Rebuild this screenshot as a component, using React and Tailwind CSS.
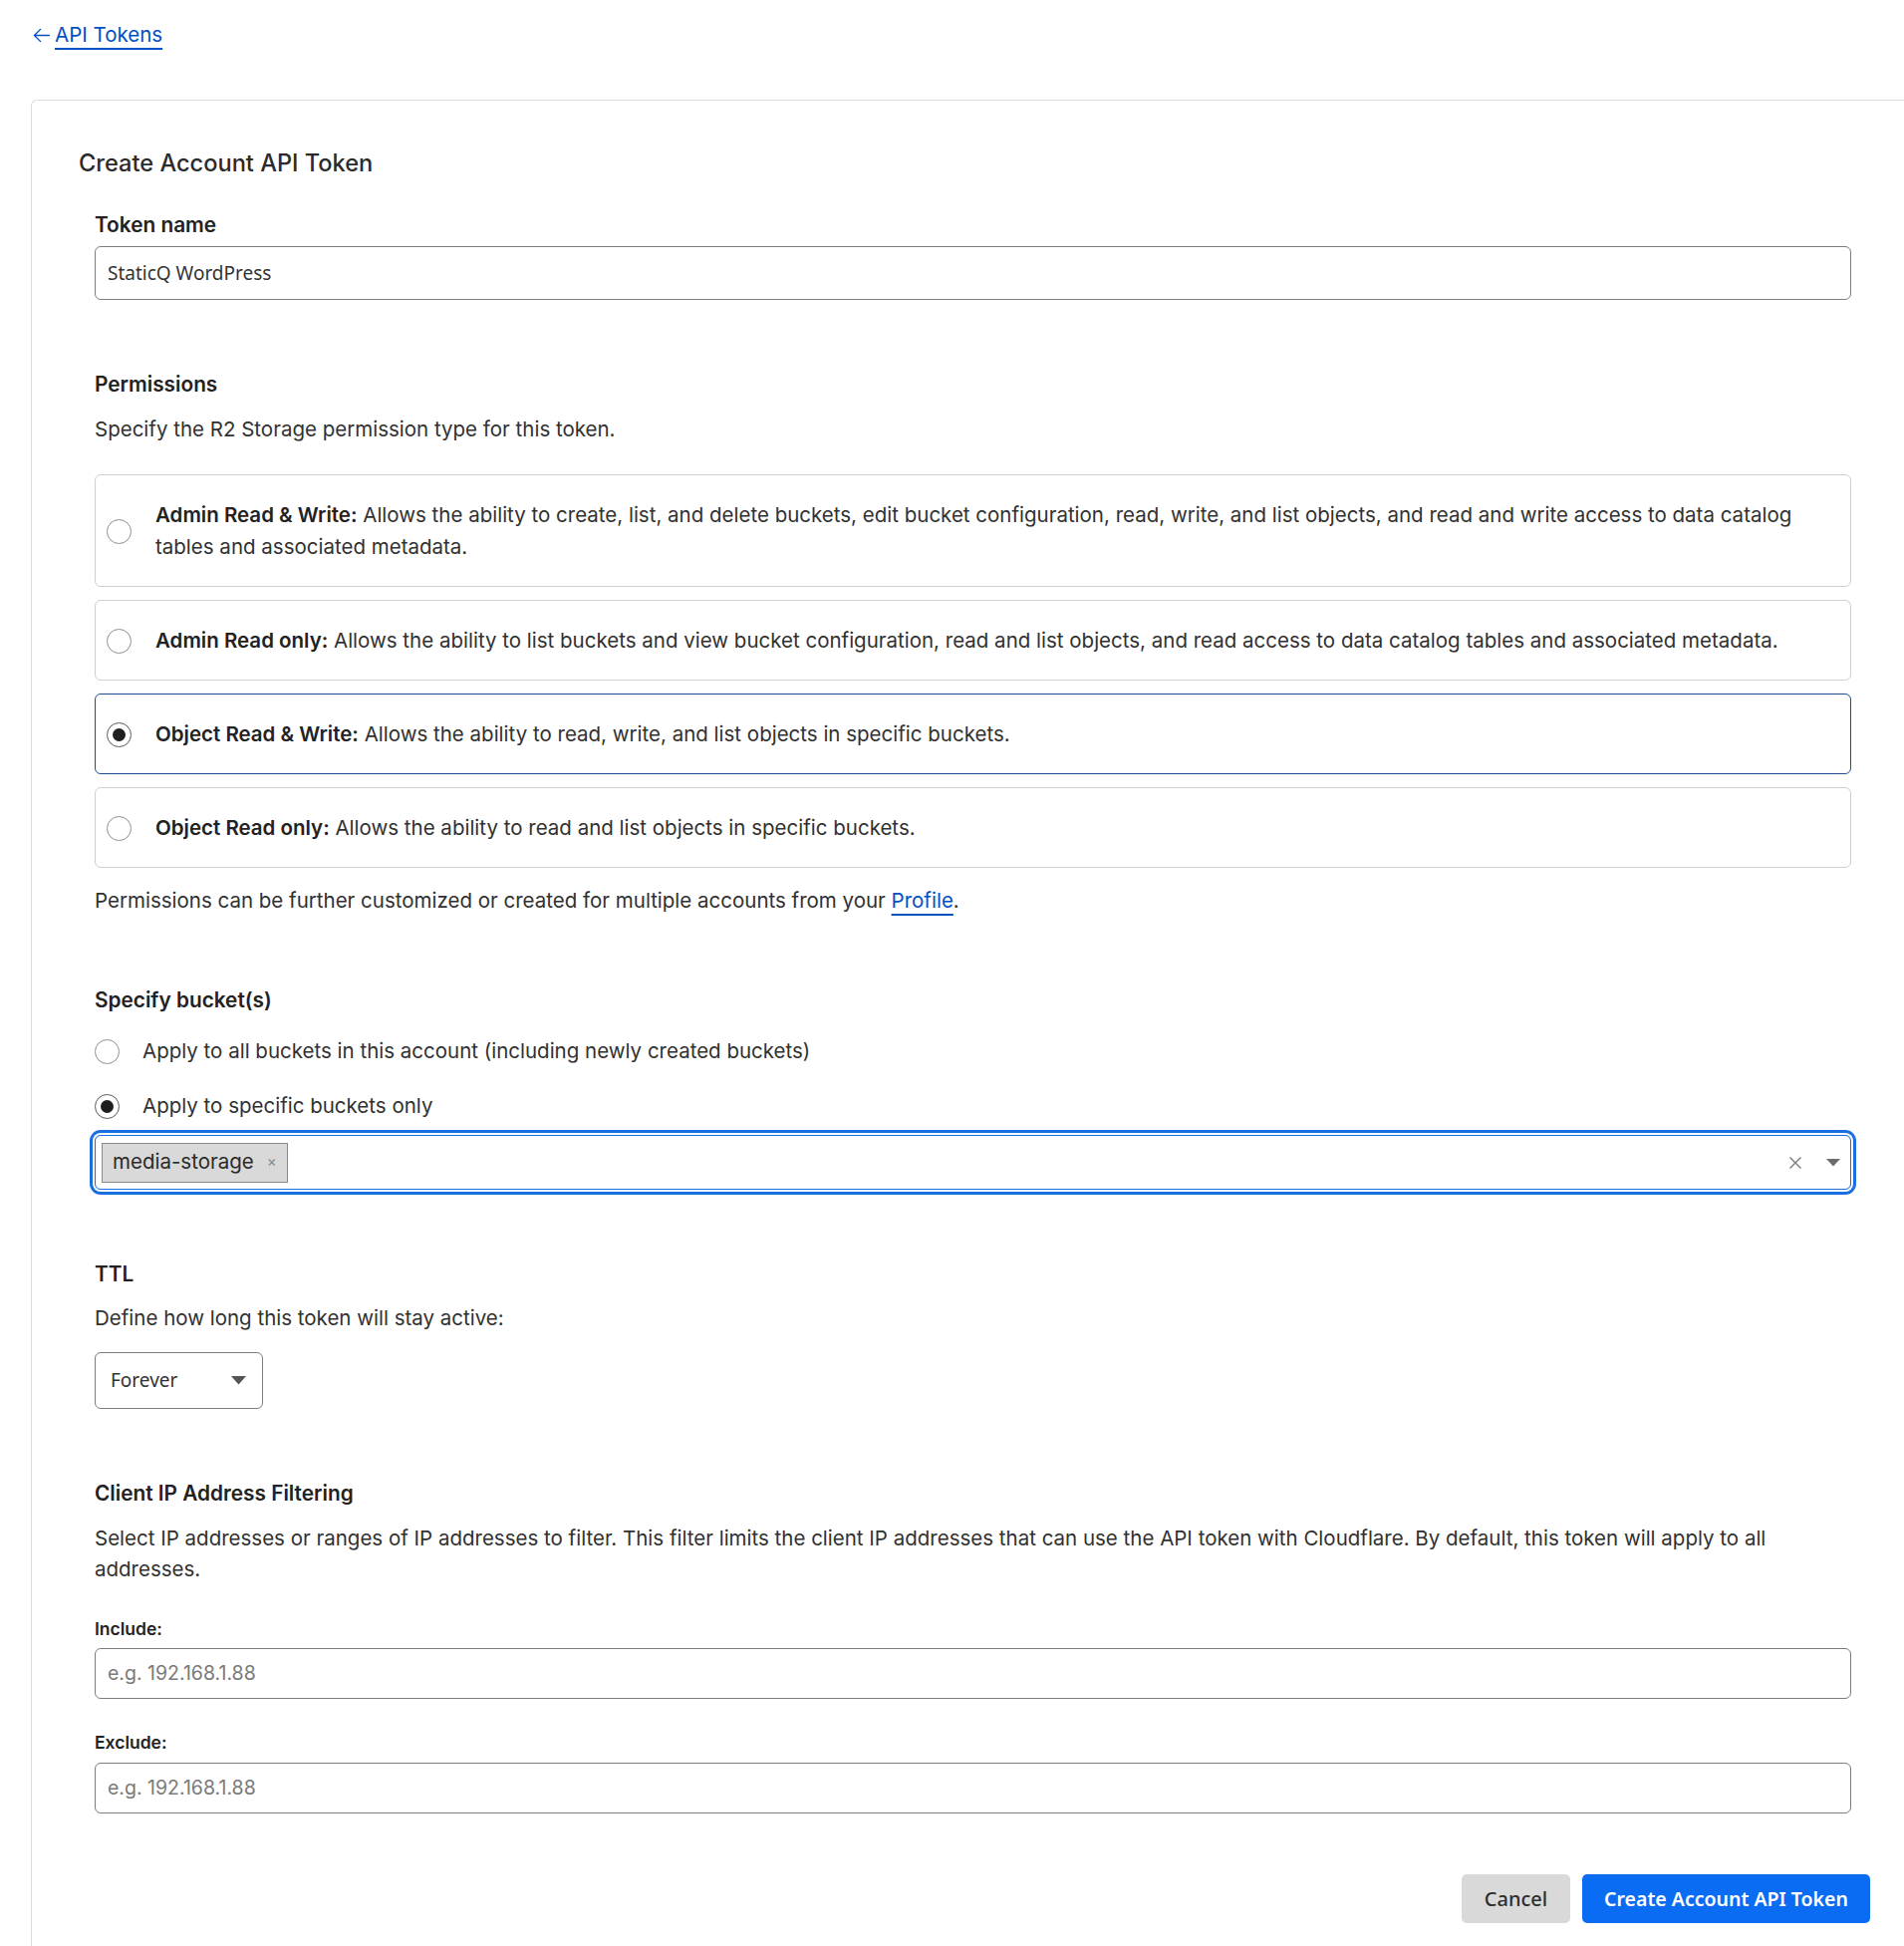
import React from "react";

const Radio = ({ checked }) => (
  <span
    className={
      "flex h-[25px] w-[25px] shrink-0 items-center justify-center rounded-full border bg-white " +
      (checked ? "border-[#5a5a5a]" : "border-[#8f8f8f]")
    }
  >
    {checked && <span className="h-[13px] w-[13px] rounded-full bg-[#1f1f1f]" />}
  </span>
);

const PermBox = ({ title, text, checked }) => (
  <div
    className={
      "flex items-center rounded-[6px] border bg-white pb-[23px] pl-[11px] pr-[24px] pt-[24px] " +
      (checked ? "border-[#1d4e8f]" : "border-[#cfcfcf]")
    }
  >
    <Radio checked={checked} />
    <p className="ml-[24px] text-[20.5px] leading-[32px] text-[#313131]">
      <span className="font-semibold text-[#222]">{title}</span> {text}
    </p>
  </div>
);

const Label = ({ children }) => (
  <div className="text-[20.8px] font-semibold leading-[28px] text-[#222]">{children}</div>
);

export default function App() {
  return (
    <div className="min-h-[1953px] overflow-hidden bg-white font-['Inter',sans-serif] text-[#313131]">
      <div className="h-[100px] pl-[31px] pt-[22px]">
        <a className="inline-flex items-center text-[20.5px] leading-[26px] text-[#0051c3]" href="#">
          <svg width="21" height="21" viewBox="0 0 24 24" fill="none" stroke="currentColor" strokeWidth="1.6" strokeLinecap="round" strokeLinejoin="round" className="mr-[3px]">
            <path d="M21 12H4" />
            <path d="M11 5l-7 7 7 7" />
          </svg>
          <span className="underline decoration-2 underline-offset-[6px]">API Tokens</span>
        </a>
      </div>

      <div className="ml-[31px] min-h-[1853px] rounded-tl-[6px] border-l border-t border-[#dcdcdc] pl-[47px] pr-[34px] pt-[47px]">
        <h1 className="text-[23.6px] font-medium leading-[32px] text-[#2b2b2b]">Create Account API Token</h1>

        <div className="ml-[16px] mr-[19px]">
          <div className="mt-[32px]">
            <Label>Token name</Label>
            <div className="mt-[7px] flex h-[54px] items-center rounded-[6px] border border-[#7d7d7d] px-[12px] font-['Noto_Sans',sans-serif] text-[19px] text-[#333]">
              StaticQ WordPress
            </div>
          </div>

          <div className="mt-[71px]">
            <Label>Permissions</Label>
            <p className="mt-[16px] text-[20.5px] leading-[30px]">Specify the R2 Storage permission type for this token.</p>
            <div className="mt-[30px] flex flex-col gap-[13px]">
              <PermBox
                title="Admin Read & Write:"
                text="Allows the ability to create, list, and delete buckets, edit bucket configuration, read, write, and list objects, and read and write access to data catalog tables and associated metadata."
              />
              <PermBox
                title="Admin Read only:"
                text="Allows the ability to list buckets and view bucket configuration, read and list objects, and read access to data catalog tables and associated metadata."
              />
              <PermBox
                checked
                title="Object Read & Write:"
                text="Allows the ability to read, write, and list objects in specific buckets."
              />
              <PermBox
                title="Object Read only:"
                text="Allows the ability to read and list objects in specific buckets."
              />
            </div>
            <p className="mt-[18px] text-[20.5px] leading-[30px]">
              Permissions can be further customized or created for multiple accounts from your{" "}
              <a href="#" className="text-[#0051c3] underline decoration-2 underline-offset-[6px]">Profile</a>.
            </p>
          </div>

          <div className="mt-[71px]">
            <Label>Specify bucket(s)</Label>
            <div className="mt-[22px] flex items-center gap-[23px]">
              <Radio />
              <span className="text-[20.5px] leading-[30px]">Apply to all buckets in this account (including newly created buckets)</span>
            </div>
            <div className="mt-[25px] flex items-center gap-[23px]">
              <Radio checked />
              <span className="text-[20.5px] leading-[30px]">Apply to specific buckets only</span>
            </div>
            <div className="mt-[14px] flex h-[55px] items-center rounded-[6px] border border-[#1a6fe3] pl-[6px] pr-[10px] shadow-[0_0_0_2px_#ffffff,0_0_0_5px_#1a6fe3]">
              <span className="flex h-[40px] items-center border border-[#8a8a8a] bg-[#d9d9d9] pl-[10px] pr-[10px] text-[20.5px] text-[#2b2b2b]">
                media-storage
                <span className="ml-[13px] text-[15px] text-[#8a8a8a]">×</span>
              </span>
              <div className="flex-1" />
              <svg width="14" height="14" viewBox="0 0 14 14" className="mr-[24px]" stroke="#7a7a7a" strokeWidth="1.4">
                <path d="M1.5 1.5l11 11M12.5 1.5l-11 11" />
              </svg>
              <svg width="14" height="8" viewBox="0 0 14 8" fill="#6b6b6b">
                <path d="M0 0h14L7 7.5z" />
              </svg>
            </div>
          </div>

          <div className="mt-[71px]">
            <Label>TTL</Label>
            <p className="mt-[15px] text-[20.5px] leading-[30px]">Define how long this token will stay active:</p>
            <div className="mt-[19px] flex h-[57px] w-[169px] items-center justify-between rounded-[6px] border border-[#7d7d7d] pl-[15px] pr-[16px] font-['Noto_Sans',sans-serif] text-[19px] text-[#333]">
              Forever
              <svg width="15" height="9" viewBox="0 0 15 9" fill="#555">
                <path d="M0 0h15L7.5 8.5z" />
              </svg>
            </div>
          </div>

          <div className="mt-[71px]">
            <Label>Client IP Address Filtering</Label>
            <p className="mt-[15px] pr-[40px] text-[20.5px] leading-[31px]">
              Select IP addresses or ranges of IP addresses to filter. This filter limits the client IP addresses that can use the API token with Cloudflare. By default, this token will apply to all addresses.
            </p>
            <div className="mt-[33px] text-[17.5px] font-semibold leading-[24px] text-[#222]">Include:</div>
            <div className="mt-[7px] flex h-[51px] items-center rounded-[6px] border border-[#7d7d7d] px-[12px] text-[19.5px] text-[#7a7a7a]">
              e.g. 192.168.1.88
            </div>
            <div className="mt-[32px] text-[17.5px] font-semibold leading-[24px] text-[#222]">Exclude:</div>
            <div className="mt-[8px] flex h-[51px] items-center rounded-[6px] border border-[#7d7d7d] px-[12px] text-[19.5px] text-[#7a7a7a]">
              e.g. 192.168.1.88
            </div>
          </div>
        </div>

        <div className="mt-[61px] flex justify-end gap-[12px]">
          <button className="h-[49px] w-[109px] rounded-[5px] bg-[#d9d9d9] font-['Noto_Sans',sans-serif] text-[20px] font-medium text-[#2f2f2f]">
            Cancel
          </button>
          <button className="h-[49px] w-[289px] rounded-[5px] bg-[#0a6cf3] font-['Noto_Sans',sans-serif] text-[19.5px] font-semibold text-white">
            Create Account API Token
          </button>
        </div>
      </div>
    </div>
  );
}
